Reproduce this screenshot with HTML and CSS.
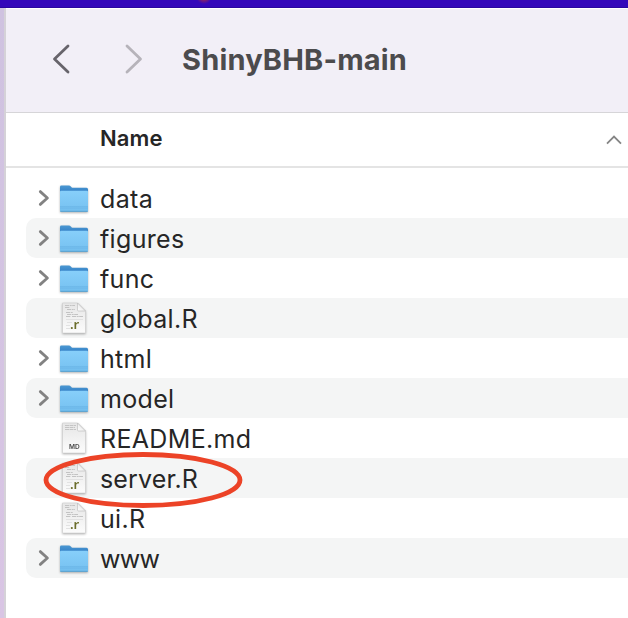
FILE: index.html
```
<!DOCTYPE html>
<html lang="en">
<head>
<meta charset="utf-8">
<title>ShinyBHB-main</title>
<link rel="stylesheet" href="styles.css">
</head>
<body>
<svg class="defs" width="0" height="0" aria-hidden="true">
  <defs>
    <linearGradient id="front" x1="0" y1="0" x2="0" y2="1">
      <stop offset="0" stop-color="#87cffa"/><stop offset="1" stop-color="#75c0f0"/>
    </linearGradient>
    <linearGradient id="back" x1="0" y1="0" x2="0" y2="1">
      <stop offset="0" stop-color="#4a98d2"/><stop offset="1" stop-color="#2f79c4"/>
    </linearGradient>
    <linearGradient id="paper" x1="0" y1="0" x2="0" y2="1">
      <stop offset="0" stop-color="#e6e6e6"/><stop offset="1" stop-color="#fcfcfc"/>
    </linearGradient>
    <linearGradient id="fold" x1="0" y1="1" x2="1" y2="0">
      <stop offset="0" stop-color="#ffffff"/><stop offset="1" stop-color="#dcdcdc"/>
    </linearGradient>
  </defs>
  <symbol id="folder" viewBox="0 0 32 32">
    <path d="M2 5Q2 3.6 3.3 3.6H11Q12 3.6 12.8 4.4L14 5.8H28.5Q30 5.8 30 7.3V12H2Z" fill="url(#back)"/>
    <path d="M2 9.8Q2 8.8 3 8.8H29Q30 8.8 30 9.8V28.7Q30 29.8 29 29.8H3Q2 29.8 2 28.7Z" fill="url(#front)"/>
    <path d="M2 24.9H30" stroke="#62aee0" stroke-width=".7"/>
    <path d="M2 26.7H30" stroke="#68b4e5" stroke-width=".6"/>
    <path d="M2.3 29.3H29.7" stroke="#589fce" stroke-width="1"/>
  </symbol>
  <symbol id="sheet" viewBox="0 0 32 32">
    <path d="M4.5 1H19.5L27.5 9V30.5Q27.5 31 27 31H5Q4.5 31 4.5 30.5Z" fill="url(#paper)" stroke="#c6c6c6" stroke-width=".5"/>
    <path d="M19.5 1V8Q19.5 9 20.5 9H27.5Z" fill="url(#fold)" stroke="#b8b8b8" stroke-width=".6"/>
  </symbol>
  <symbol id="rsheet" viewBox="0 0 32 32">
    <use href="#sheet"/>
    <g stroke="#c3c3c3" stroke-width="1" fill="none">
      <path d="M7 3.5H17M7 5.5H12M9 7.5H17M8 10.5H15M9 12.5H20M8 14.5H13M14 14.5H25" stroke-dasharray="4 .7 2 .5"/>
      <path d="M8 17.5H25M9 20.5H14M8 23.5H12M8 26.5H12" stroke="#e2e2e2"/>
    </g>
  </symbol>
  <symbol id="mdsheet" viewBox="0 0 32 32">
    <use href="#sheet"/>
    <path d="M7 3.5H18M7 5.5H17M7 7.5H18" stroke="#c4c4c4" stroke-width="1" stroke-dasharray="4 .5"/>
  </symbol>
  <symbol id="chevron" viewBox="0 0 12 18">
    <path d="M2.3 2.6L9.4 9L2.3 15.4" fill="none" stroke="#828282" stroke-width="2.8" stroke-linecap="round" stroke-linejoin="round"/>
  </symbol>
</svg>
<div class="desktop"></div>
<main class="window">
  <header class="toolbar">
    <svg class="nav" viewBox="0 0 20 32"><path d="M17 3L3.5 16L17 29" stroke="#67646b"/></svg>
    <svg class="nav next" viewBox="0 0 20 32"><path d="M3 3L16.5 16L3 29" stroke="#b6b3ba"/></svg>
    <h1 class="title">ShinyBHB-main</h1>
  </header>
  <div class="columns">
    <span class="column-name">Name</span>
    <svg class="sort" viewBox="0 0 16 10"><path d="M1 8.6L8 1.5L15 8.6"/></svg>
  </div>
  <ul class="files">
    <li class="row"><svg class="chev"><use href="#chevron"/></svg><svg class="icon"><use href="#folder"/></svg><span class="name">data</span></li>
    <li class="row"><svg class="chev"><use href="#chevron"/></svg><svg class="icon"><use href="#folder"/></svg><span class="name">figures</span></li>
    <li class="row"><svg class="chev"><use href="#chevron"/></svg><svg class="icon"><use href="#folder"/></svg><span class="name">func</span></li>
    <li class="row"><span class="chev"></span><svg class="icon"><use href="#rsheet"/><text x="12" y="26.5" class="r-label">.r</text></svg><span class="name">global.R</span></li>
    <li class="row"><svg class="chev"><use href="#chevron"/></svg><svg class="icon"><use href="#folder"/></svg><span class="name">html</span></li>
    <li class="row"><svg class="chev"><use href="#chevron"/></svg><svg class="icon"><use href="#folder"/></svg><span class="name">model</span></li>
    <li class="row"><span class="chev"></span><svg class="icon"><use href="#mdsheet"/><text x="16.3" y="27" class="md-label" text-anchor="middle">MD</text></svg><span class="name">README.md</span></li>
    <li class="row"><span class="chev"></span><svg class="icon"><use href="#rsheet"/><text x="12" y="26.5" class="r-label">.r</text></svg><span class="name server">server.R</span>
      <svg class="ring" viewBox="0 0 200 58"><ellipse cx="100" cy="29" rx="97" ry="25.5"/></svg></li>
    <li class="row"><span class="chev"></span><svg class="icon"><use href="#rsheet"/><text x="12" y="26.5" class="r-label">.r</text></svg><span class="name">ui.R</span></li>
    <li class="row"><svg class="chev"><use href="#chevron"/></svg><svg class="icon"><use href="#folder"/></svg><span class="name www">www</span></li>
  </ul>
</main>
</body>
</html>
```
FILE: styles.css
```
* { box-sizing: border-box; }
body {
  margin: 0;
  height: 618px;
  overflow: hidden;
  display: flex;
  flex-direction: column;
  background: linear-gradient(#cfc2e0, #d9c5e4);
  font-family: Inter, "Liberation Sans", sans-serif;
  color: #262626;
}
.defs { position: absolute; }
.desktop {
  flex: none;
  height: 8px;
  background: radial-gradient(circle at 204px -4px, #84216c 4px, transparent 8px), linear-gradient(#3408ba 85%, #23068c);
}
.window {
  flex: 1;
  margin-left: 4px;
  border-left: 2px solid #d5d2d8;
  background: #fff;
}
.toolbar {
  height: 105px;
  display: flex;
  align-items: center;
  padding: 0 0 2px 45px;
  background: #f2eff7;
  border-top: 1px solid #fff;
  border-bottom: 1px solid #d6d5d8;
}
.nav { width: 20px; height: 32px; margin-top: -2px; fill: none; stroke-width: 2.8; stroke-linecap: round; stroke-linejoin: round; }
.next { margin-left: 53px; }
.title { margin: 1px 0 0 38px; font-size: 29px; line-height: 36px; font-weight: 650; letter-spacing: 0.17px; color: #4c4b4d; white-space: nowrap; }
.columns {
  height: 55px;
  display: flex;
  align-items: center;
  justify-content: space-between;
  padding: 0 6px 2px 94px;
  border-bottom: 2px solid #e4e4e4;
}
.column-name { margin-top: -2px; font-size: 22px; font-weight: 600; letter-spacing: 0.1px; }
.sort { width: 16px; height: 10px; margin-top: 2px; fill: none; stroke: #858585; stroke-width: 1.8; }
.files { list-style: none; margin: 0; padding: 10px 0 0 20px; }
.row {
  position: relative;
  height: 40px;
  display: flex;
  align-items: center;
  padding-left: 12px;
  border-radius: 10px 0 0 10px;
}
.row:nth-child(even) { background: #f4f5f5; }
.chev { width: 12px; height: 18px; flex: none; margin-top: -1px; }
.icon { width: 32px; height: 32px; flex: none; margin: 0 0 1px 8px; filter: drop-shadow(0 1px 1px rgba(0, 0, 0, .3)); }
.name { margin: 2px 0 0 10px; font-size: 25px; line-height: 36px; font-weight: 420; letter-spacing: 0.33px; white-space: nowrap; }
.server { letter-spacing: 0.15px; }
.www { letter-spacing: -0.7px; }
.r-label { font: 600 13px "Noto Sans", sans-serif; fill: #6b6e2c; }
.md-label { font: 600 6.5px Inter, sans-serif; fill: #444; }
.ring { position: absolute; left: 16.5px; top: -7.5px; width: 200px; height: 58px; fill: none; stroke: #ec4327; stroke-width: 4.8; }
```
